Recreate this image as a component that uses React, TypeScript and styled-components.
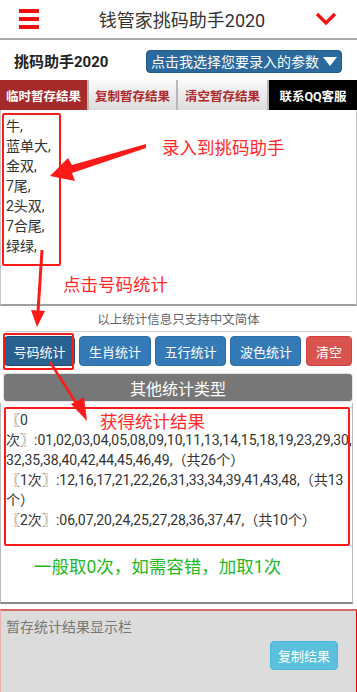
import React from "react";
import styled, { createGlobalStyle } from "styled-components";

const GlobalStyle = createGlobalStyle`
  html, body {
    margin: 0;
    padding: 0;
    background: #fff;
  }
  body {
    font-family: Roboto, "Noto Sans CJK SC", sans-serif;
    color: #333;
  }
`;

const Page = styled.div`
  position: relative;
  width: 357px;
  height: 692px;
  overflow: hidden;
  background: #fff;
`;

const Header = styled.header`
  height: 38px;
  display: flex;
  align-items: center;
  justify-content: space-between;
  padding: 0 20px 0 19px;
  border-bottom: 2px solid #aaa;
`;

const Burger = styled.div`
  width: 20px;
  display: flex;
  flex-direction: column;
  gap: 4px;
  & > span {
    display: block;
    height: 4px;
    background: #f01010;
  }
`;

const Title = styled.h1`
  margin: 0;
  font-size: 18px;
  font-weight: 400;
  color: #333;
  padding-left: 10px;
`;

const SubBar = styled.div`
  height: 40px;
  display: flex;
  align-items: center;
  justify-content: space-between;
  padding: 0 15px 0 14px;
`;

const SubTitle = styled.div`
  font-size: 15px;
  font-weight: 700;
  color: #222;
`;

const ParamButton = styled.button`
  height: 23px;
  width: 196px;
  margin-top: 2px;
  border: 1px solid #255c8c;
  border-radius: 4px;
  background: #2b6a9e;
  color: #fff;
  font-family: inherit;
  font-size: 14px;
  padding: 0;
  display: flex;
  align-items: center;
  justify-content: center;
  gap: 4px;
`;

const Tabs = styled.div`
  display: grid;
  grid-template-columns: 87px 87px 89px 88px;
  gap: 2px;
  background: #b8b8b8;
  height: 30px;
`;

const Tab = styled.div<{ $kind: "active" | "plain" | "dark" }>`
  display: flex;
  align-items: center;
  justify-content: center;
  font-size: 12.5px;
  font-weight: 700;
  background: ${(p) =>
    p.$kind === "active"
      ? "#a52b2b"
      : p.$kind === "dark"
      ? "#000"
      : "linear-gradient(#fafafa, #dcdcdc)"};
  color: ${(p) => (p.$kind === "plain" ? "#b0282a" : "#fff")};
`;

const InputBox = styled.div`
  height: 188px;
  padding: 6px 0 0 5px;
  border: 1px solid #c8c8c8;
  border-top: none;
  border-bottom: 2px solid #a0a0a0;
  font-size: 14px;
  line-height: 20px;
  color: #333;
`;

const Note = styled.div`
  margin: 5px 5px 0 5px;
  padding-bottom: 2px;
  border-bottom: 1px solid #d0d0d0;
  text-align: center;
  font-size: 12.5px;
  line-height: 18px;
  color: #666;
`;

const ButtonRow = styled.div`
  display: flex;
  justify-content: space-between;
  padding: 4px 5px 0 4px;
`;

const StatButton = styled.button<{ $tone: "blue" | "dark" | "red" }>`
  height: 30px;
  padding: 0 ${(p) => (p.$tone === "red" ? 9 : 8.5)}px;
  border-radius: 4px;
  font-family: inherit;
  font-size: 13px;
  color: #fff;
  border: 1px solid
    ${(p) =>
      p.$tone === "red" ? "#d43f3a" : p.$tone === "dark" ? "#204d74" : "#2e6da4"};
  background: ${(p) =>
    p.$tone === "red" ? "#d9534f" : p.$tone === "dark" ? "#286090" : "#337ab7"};
`;

const OtherBar = styled.div`
  margin: 8px 5px 0 4px;
  height: 27px;
  border-radius: 3px;
  background: #777;
  box-shadow: 0 0 0 1px #e2e2e2;
  color: #fff;
  font-size: 16px;
  display: flex;
  align-items: center;
  justify-content: center;
`;

const ResultBox = styled.div`
  margin-top: 2px;
  height: 201px;
  width: 353px;
  box-sizing: border-box;
  padding: 7px 0 0 5px;
  border: 1px solid #bbb;
  border-top: none;
  border-bottom: 2px solid #8a8a8a;
  font-size: 14px;
  line-height: 20px;
  color: #333;
`;

const Line = styled.div`
  white-space: nowrap;
`;

const Bracket = styled.span`
  color: #555;
`;

const Hint = styled.div`
  margin-top: 26px;
  padding-left: 28px;
  font-size: 17.5px;
  line-height: 22px;
  color: #1fb81f;
`;

const StashPanel = styled.div`
  margin-top: 5px;
  height: 81px;
  background: #dcdcdc;
  border-top: 2px solid #d96a6a;
  border-right: 1px solid #e00000;
  border-left: 1px solid #e8b0b0;
  padding: 7px 18px 0 5px;
  display: flex;
  flex-direction: column;
`;

const StashLabel = styled.div`
  font-size: 14px;
  line-height: 18px;
  color: #777;
`;

const CopyButton = styled.button`
  align-self: flex-end;
  margin-top: 5px;
  height: 29px;
  width: 68px;
  border-radius: 4px;
  border: 1px solid #46b8da;
  background: #5bc0de;
  color: #fff;
  font-family: inherit;
  font-size: 13px;
  padding: 0;
`;

const Overlay = styled.div`
  position: absolute;
  inset: 0;
  pointer-events: none;
`;

const Frame = styled.div<{ $x: number; $y: number; $w: number; $h: number }>`
  position: absolute;
  left: ${(p) => p.$x}px;
  top: ${(p) => p.$y}px;
  width: ${(p) => p.$w}px;
  height: ${(p) => p.$h}px;
  box-sizing: border-box;
  border: 2px solid #ff1a1a;
  border-radius: 2px;
`;

const Callout = styled.div<{ $x: number; $y: number; $color?: string }>`
  position: absolute;
  left: ${(p) => p.$x}px;
  top: ${(p) => p.$y}px;
  font-size: 17.5px;
  line-height: 20px;
  white-space: nowrap;
  color: ${(p) => p.$color || "#ff2a2a"};
`;

const Arrows = styled.svg`
  position: absolute;
  left: 0;
  top: 0;
`;

const inputs = ["牛,", "蓝单大,", "金双,", "7尾,", "2头双,", "7合尾,", "绿绿,"];

export default function App() {
  return (
    <Page>
      <GlobalStyle />
      <Header>
        <Burger>
          <span />
          <span />
          <span />
        </Burger>
        <Title>钱管家挑码助手2020</Title>
        <svg width="22" height="14" viewBox="0 0 22 14">
          <path d="M2 2 L11 11 L20 2" fill="none" stroke="#f01010" strokeWidth="3.2" />
        </svg>
      </Header>

      <SubBar>
        <SubTitle>挑码助手2020</SubTitle>
        <ParamButton>
          点击我选择您要录入的参数
          <svg width="14" height="9" viewBox="0 0 14 9">
            <path d="M0 0 H14 L7 9 Z" fill="#fff" />
          </svg>
        </ParamButton>
      </SubBar>

      <Tabs>
        <Tab $kind="active">临时暂存结果</Tab>
        <Tab $kind="plain">复制暂存结果</Tab>
        <Tab $kind="plain">清空暂存结果</Tab>
        <Tab $kind="dark">联系QQ客服</Tab>
      </Tabs>

      <InputBox>
        {inputs.map((t) => (
          <div key={t}>{t}</div>
        ))}
      </InputBox>

      <Note>以上统计信息只支持中文简体</Note>

      <ButtonRow>
        <StatButton $tone="dark">号码统计</StatButton>
        <StatButton $tone="blue">生肖统计</StatButton>
        <StatButton $tone="blue">五行统计</StatButton>
        <StatButton $tone="blue">波色统计</StatButton>
        <StatButton $tone="red">清空</StatButton>
      </ButtonRow>

      <OtherBar>其他统计类型</OtherBar>

      <ResultBox>
        <Line>
          <Bracket>〖</Bracket>0
        </Line>
        <Line>
          次<Bracket>〗</Bracket>:01,02,03,04,05,08,09,10,11,13,14,15,18,19,23,29,30,
        </Line>
        <Line>32,35,38,40,42,44,45,46,49,（共26个）</Line>
        <Line>
          <Bracket>〖</Bracket>1次<Bracket>〗</Bracket>:12,16,17,21,22,26,31,33,34,39,41,43,48,（共13
        </Line>
        <Line>个）</Line>
        <Line>
          <Bracket>〖</Bracket>2次<Bracket>〗</Bracket>:06,07,20,24,25,27,28,36,37,47,（共10个）
        </Line>
        <Hint>一般取0次，如需容错，加取1次</Hint>
      </ResultBox>

      <StashPanel>
        <StashLabel>暂存统计结果显示栏</StashLabel>
        <CopyButton>复制结果</CopyButton>
      </StashPanel>

      <Overlay>
        <Frame $x={2} $y={113} $w={59} $h={153} />
        <Frame $x={3} $y={333} $w={71} $h={37} />
        <Frame $x={4} $y={407} $w={346} $h={139} />
        <Callout $x={162} $y={138}>录入到挑码助手</Callout>
        <Callout $x={63} $y={275}>点击号码统计</Callout>
        <Callout $x={100} $y={412}>获得统计结果</Callout>
        <Arrows width="357" height="692" viewBox="0 0 357 692">
          <polygon points="146,144 72,165 68,158 50,176 75,181 72,173 146,148" fill="#ff1a1a" />
          <line x1="42" y1="250" x2="38" y2="312" stroke="#ff1a1a" strokeWidth="3" />
          <polygon points="31,310 45,311 37,327" fill="#ff1a1a" />
          <line x1="50" y1="362" x2="78" y2="406" stroke="#ff1a1a" strokeWidth="2.5" />
          <polygon points="71,404 84,397 87,421" fill="#ff1a1a" />
        </Arrows>
      </Overlay>
    </Page>
  );
}
